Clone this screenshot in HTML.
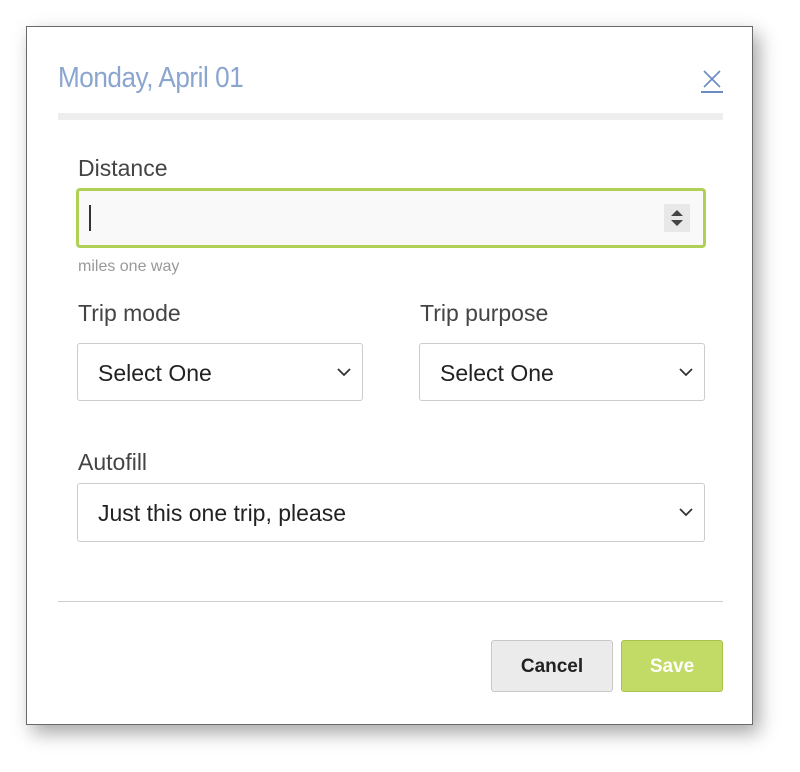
<!DOCTYPE html>
<html><head><style>
body{margin:0;width:800px;height:772px;background:#fff;font-family:"Liberation Sans",sans-serif;position:relative;overflow:hidden}
.dlg{position:absolute;left:26px;top:26px;width:725px;height:697px;border:1px solid #6a6a6a;background:#fff;box-shadow:6px 8px 18px rgba(0,0,0,.35)}
.a{position:absolute}
.title{left:58px;top:62px;font-size:29px;color:#8aa5cf;letter-spacing:-0.5px;transform:scaleX(.9);transform-origin:left}
.lbl{font-size:23px;color:#444}
.sel{border:1px solid #ccc;border-radius:3px;background:#fff;height:56px;box-sizing:border-box;font-size:23px;color:#222;padding:16px 0 0 20px}
.chev{position:absolute;right:10px;top:20px}
</style></head><body>
<div class="dlg"></div>
<div class="a title">Monday, April 01</div>
<svg class="a" style="left:702px;top:69px" width="20" height="20"><path d="M2 2 L18 18 M18 2 L2 18" stroke="#6a8cc0" stroke-width="1.6"/></svg>
<div class="a" style="left:701px;top:91px;width:22px;height:1.5px;background:#6a8cc0"></div>
<div class="a" style="left:58px;top:113px;width:665px;height:7px;background:#eeeeee"></div>
<div class="a lbl" style="left:78px;top:155px">Distance</div>
<div class="a" style="left:76px;top:188px;width:630px;height:60px;box-sizing:border-box;border:3px solid #b0cf55;border-radius:4px;background:#f9f9f9"></div>
<div class="a" style="left:89px;top:205px;width:2px;height:26px;background:#333"></div>
<div class="a" style="left:664px;top:204px;width:26px;height:28px;background:#e8e8e8"></div>
<svg class="a" style="left:668px;top:206px" width="18" height="24"><path d="M3 10 L9 4 L15 10Z M3 14 L9 20 L15 14Z" fill="#444"/></svg>
<div class="a" style="left:78px;top:258px;font-size:16px;color:#999">miles one way</div>
<div class="a lbl" style="left:78px;top:300px">Trip mode</div>
<div class="a lbl" style="left:420px;top:300px">Trip purpose</div>
<div class="a sel" style="left:77px;top:343px;width:286px;height:58px">Select One<svg class="chev" width="16" height="16"><path d="M2 5 L8 11 L14 5" stroke="#333" stroke-width="1.8" fill="none"/></svg></div>
<div class="a sel" style="left:419px;top:343px;width:286px;height:58px">Select One<svg class="chev" width="16" height="16"><path d="M2 5 L8 11 L14 5" stroke="#333" stroke-width="1.8" fill="none"/></svg></div>
<div class="a lbl" style="left:78px;top:449px">Autofill</div>
<div class="a sel" style="left:77px;top:483px;width:628px;height:59px">Just this one trip, please<svg class="chev" width="16" height="16"><path d="M2 5 L8 11 L14 5" stroke="#333" stroke-width="1.8" fill="none"/></svg></div>
<div class="a" style="left:58px;top:601px;width:665px;height:1px;background:#ccc"></div>
<div class="a" style="left:491px;top:640px;width:122px;height:52px;box-sizing:border-box;border:1px solid #c8c8c8;border-radius:3px;background:#ebebeb;font-size:19px;font-weight:bold;color:#222;text-align:center;line-height:51px">Cancel</div>
<div class="a" style="left:621px;top:640px;width:102px;height:52px;box-sizing:border-box;border:1px solid #a8c24a;border-radius:3px;background:#c2da66;font-size:19px;font-weight:bold;color:#fff;text-align:center;line-height:51px">Save</div>
</body></html>
